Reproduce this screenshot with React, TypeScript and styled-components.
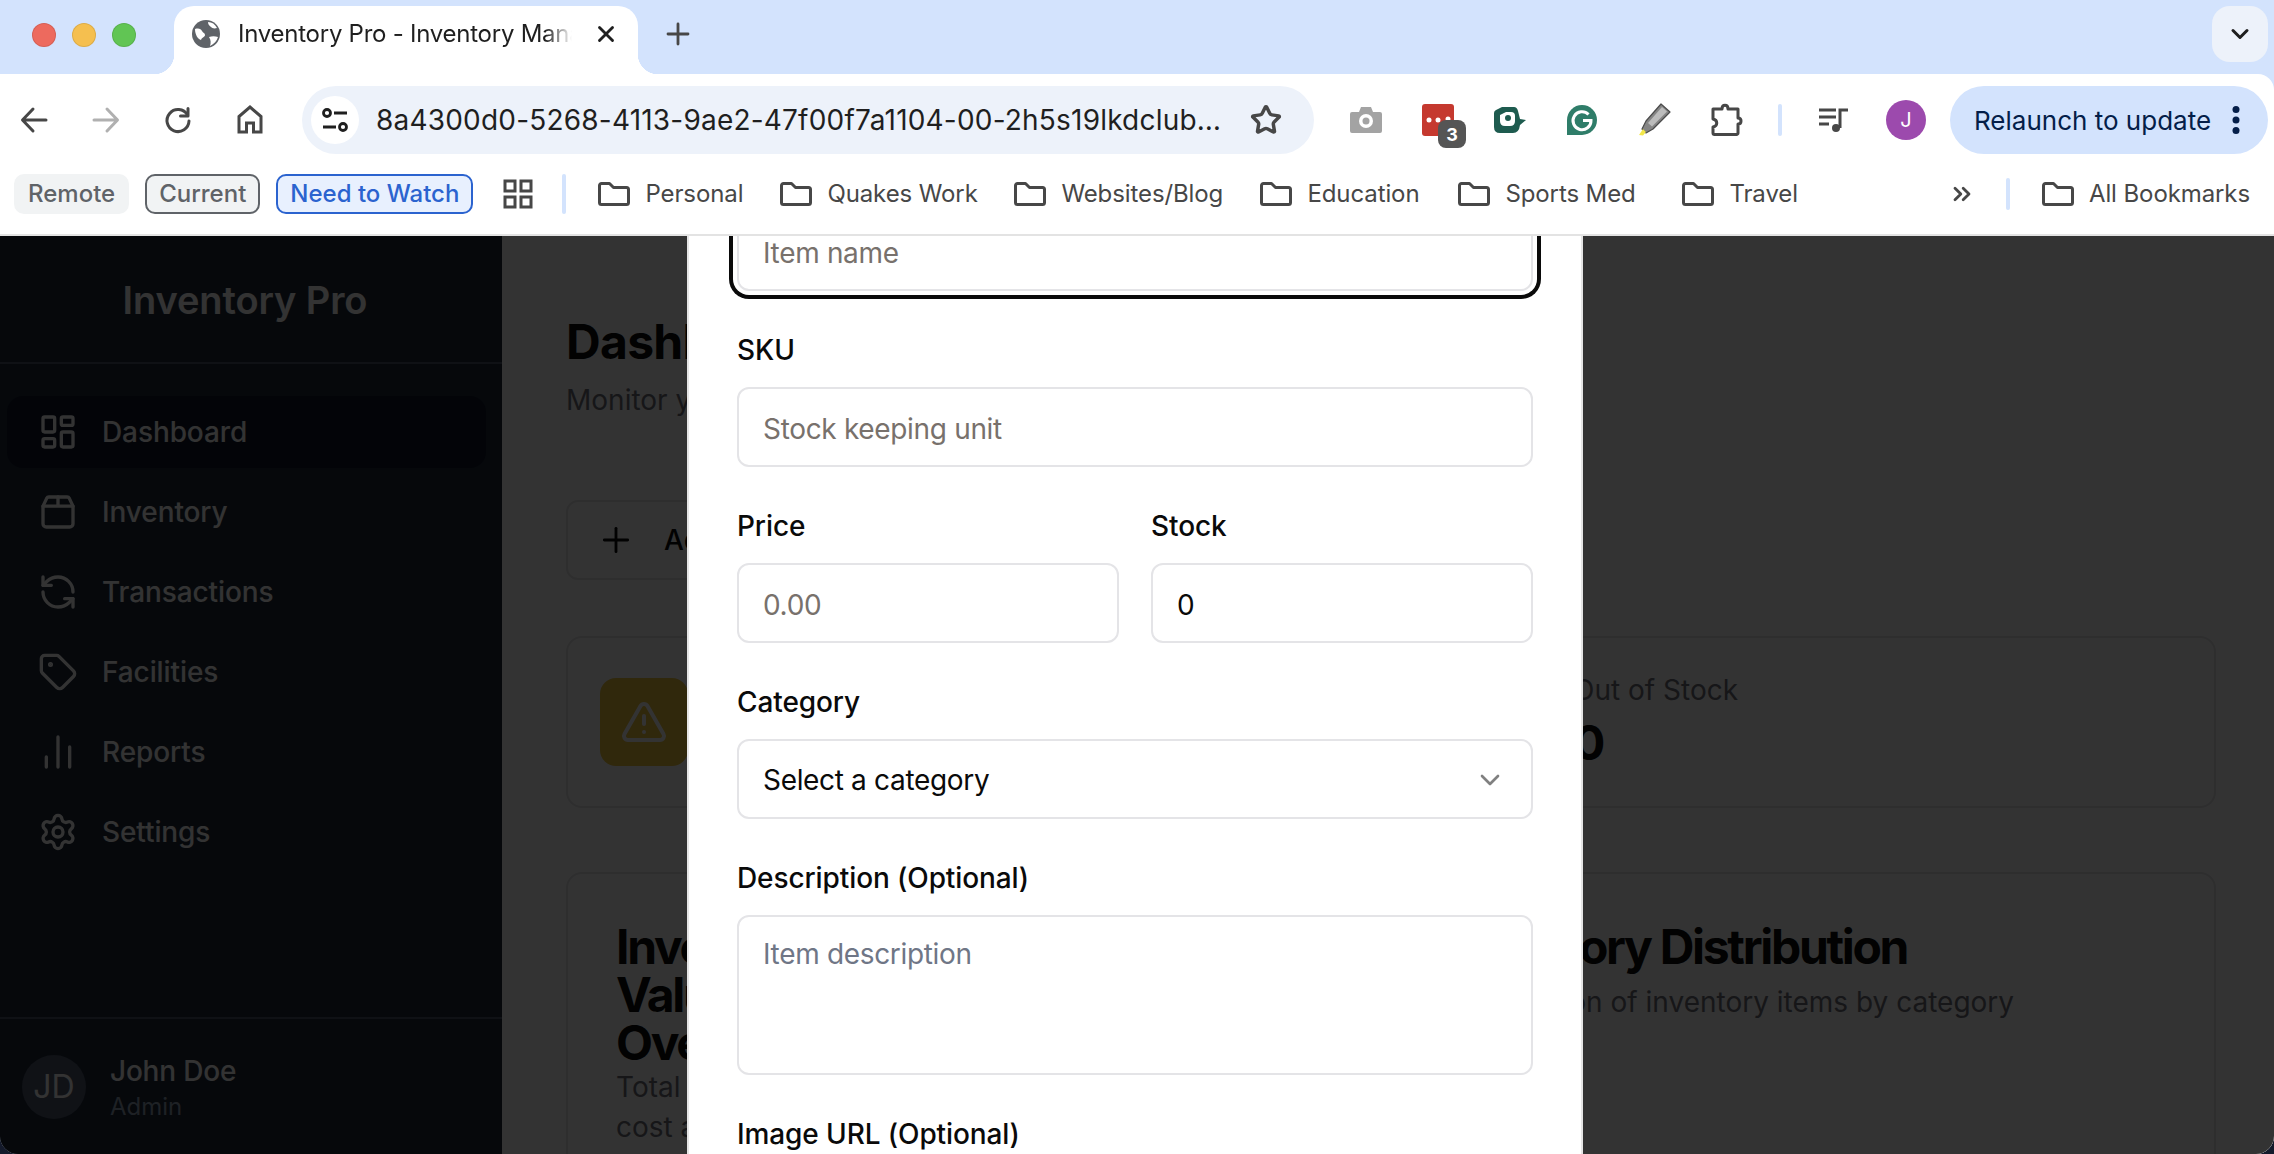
import React from "react";
import styled, { createGlobalStyle } from "styled-components";
import { LayoutDashboard, RefreshCcw, Tag, ChartNoAxesColumn, Settings, Plus, TriangleAlert, ChevronDown, Star, X, ChevronsRight } from "lucide-react";

const Global = createGlobalStyle`
  html, body { margin: 0; padding: 0; background: #141a2b; }
  * { box-sizing: border-box; }
  body { font-family: Inter, "Liberation Sans", sans-serif; }
`;

const Shell = styled.div`
  position: relative; width: 2274px; height: 1154px; overflow: hidden;
  display: flex; flex-direction: column;
  border-radius: 0 0 18px 18px; background: #fff;
`;
const Chrome = styled.header` background: #d3e3fd; flex: none; `;
const TabStrip = styled.div` height: 74px; display: flex; align-items: flex-start; padding-top: 6px; `;
const Lights = styled.div` display: flex; gap: 16px; margin: 17px 38px 0 32px; `;
const Light = styled.span<{ $c: string }>`
  width: 24px; height: 24px; border-radius: 50%; background: ${p => p.$c}; box-shadow: inset 0 0 0 1px rgba(0,0,0,.1);
`;
const Tab = styled.div`
  position: relative; width: 464px; height: 68px; background: #fff; border-radius: 20px 20px 0 0;
  display: flex; align-items: center; padding: 0 18px 12px; gap: 18px;
  &::before, &::after { content: ""; position: absolute; bottom: 0; width: 20px; height: 20px; }
  &::before { left: -20px; background: radial-gradient(circle at 0 0, transparent 20px, #fff 20.5px); }
  &::after { right: -20px; background: radial-gradient(circle at 100% 0, transparent 20px, #fff 20.5px); }
`;
const TabTitle = styled.span`
  width: 334px; flex: none; overflow: hidden; white-space: nowrap; font-size: 24px; line-height: 32px; color: #1f1f1f; letter-spacing: -.25px;
  -webkit-mask-image: linear-gradient(90deg, #000 92%, transparent 100%);
  mask-image: linear-gradient(90deg, #000 92%, transparent 100%);
`;
const TabClose = styled.span` display: flex; margin-left: 3px; color: #1f1f1f; `;
const NewTab = styled.span` display: flex; margin: 16px 0 0 28px; color: #474747; `;
const TabMenu = styled.span`
  margin-left: auto; margin-right: 6px; width: 56px; height: 56px; border-radius: 18px; background: #edf2fa;
  display: flex; align-items: center; justify-content: center; color: #1f1f1f;
`;
const Toolbar = styled.div`
  height: 90px; background: #fff; border-radius: 0 16px 0 0; display: flex; align-items: center;
  padding: 2px 6px 0; gap: 16px;
`;
const ToolButton = styled.span<{ $faded?: boolean }>`
  width: 56px; height: 56px; flex: none; display: flex; align-items: center; justify-content: center;
  position: relative; color: ${p => (p.$faded ? "#b0b0b0" : "#474747")};
`;
const Address = styled.div`
  width: 1012px; height: 68px; flex: none; margin: 0 8px; border-radius: 34px; background: #edf2fa;
  display: flex; align-items: center; padding: 0 32px 0 9px; color: #1f1f1f;
`;
const SiteChip = styled.span`
  width: 48px; height: 48px; border-radius: 50%; background: #fff; flex: none;
  display: flex; align-items: center; justify-content: center; margin-right: 17px;
`;
const Url = styled.span` font-size: 28px; line-height: 36px; white-space: nowrap; flex: 1; letter-spacing: .2px; `;
const Badge = styled.span`
  position: absolute; left: 28px; top: 28px; width: 28px; height: 28px; border-radius: 8px; background: #555;
  color: #fff; font-size: 18px; font-weight: 700; display: flex; align-items: center; justify-content: center;
`;
const VSep = styled.span<{ $h: number }>` width: 4px; height: ${p => p.$h}px; border-radius: 2px; background: #d3e3fd; flex: none; `;
const ToolSep = styled(VSep)` margin: 0 8px 0 8px; `;
const Avatar = styled.span`
  width: 40px; height: 40px; border-radius: 50%; background: #9c4aad; color: #fff; flex: none;
  font-size: 20px; display: flex; align-items: center; justify-content: center; margin-left: 8px;
`;
const Relaunch = styled.div`
  margin-left: auto; width: 318px; height: 68px; border-radius: 34px; background: #d3e3fd; color: #041e49;
  display: flex; align-items: center; justify-content: space-between; padding: 0 27px 0 24px;
  font-size: 26px; white-space: nowrap;
`;
const Bookmarks = styled.nav`
  height: 70px; background: #fff; display: flex; align-items: center; padding: 0 24px 10px 14px;
`;
const Chip = styled.span<{ $tone: "plain" | "grey" | "blue" }>`
  height: 40px; padding: 0 12px; border-radius: 10px; font-size: 24px; font-weight: 500; line-height: 36px;
  margin-right: 16px; white-space: nowrap;
  border: 2px solid ${p => (p.$tone === "plain" ? "#f1f3f4" : p.$tone === "grey" ? "#5f6368" : "#2b63cf")};
  background: ${p => (p.$tone === "blue" ? "#e8f0fe" : "#f1f3f4")};
  color: ${p => (p.$tone === "blue" ? "#2b63cf" : "#5f6368")};
`;
const AppsIcon = styled.span` display: flex; margin: 0 29px 0 14px; color: #474747; `;
const FolderList = styled.div` display: flex; align-items: center; margin-left: 32px; `;
const Folder = styled.span<{ $w?: number }>`
  display: flex; align-items: center; gap: 15px; font-size: 24px; line-height: 32px; color: #474747; white-space: nowrap; letter-spacing: -.1px;
  flex: none; ${p => (p.$w ? `width: ${p.$w}px;` : "")}
`;
const BookmarkEnd = styled.div` margin-left: auto; display: flex; align-items: center; color: #474747; `;
const EndSep = styled(VSep)` margin: 0 32px 0 30px; `;
const Rule = styled.div` height: 2px; background: #e3e3e3; flex: none; `;

const AppArea = styled.div` position: relative; flex: 1; display: flex; min-height: 0; overflow: hidden; `;
const Sidebar = styled.aside` width: 502px; flex: none; background: #1e293b; color: #fff; display: flex; flex-direction: column; `;
const Brand = styled.div`
  height: 128px; flex: none; border-bottom: 2px solid #4a5568; display: flex; align-items: center; justify-content: center;
  font-size: 38px; font-weight: 600; padding: 2px 12px 0 0; letter-spacing: -.1px;
`;
const Nav = styled.div` flex: 1; padding: 32px 16px 0 7px; display: flex; flex-direction: column; gap: 8px; `;
const NavRow = styled.div<{ $active?: boolean }>`
  height: 72px; border-radius: 16px; display: flex; align-items: center; gap: 24px; padding-left: 31px;
  font-size: 28px; font-weight: 500; letter-spacing: -.1px; background: ${p => (p.$active ? "#0f172a" : "transparent")};
`;
const UserBar = styled.div`
  height: 137px; flex: none; border-top: 2px solid #4a5568; display: flex; align-items: center; gap: 24px; padding: 0 0 0 22px;
`;
const UserAvatar = styled.div`
  width: 64px; height: 64px; border-radius: 50%; background: #505a6e; font-size: 32px;
  display: flex; align-items: center; justify-content: center;
`;
const UserText = styled.div` padding-top: 2px; `;
const UserName = styled.div` font-size: 28px; font-weight: 500; line-height: 36px; letter-spacing: -.2px; `;
const UserRole = styled.div` font-size: 24px; line-height: 32px; color: #94a3b8; margin-top: 2px; `;

const Main = styled.main` flex: 1; min-width: 0; background: #fff; padding: 76px 58px 0 64px; color: #0a0a0a; `;
const Heading = styled.h1` margin: 0; font-size: 48px; font-weight: 700; line-height: 60px; letter-spacing: -.7px; `;
const Lead = styled.p` margin: 8px 0 0; font-size: 28px; line-height: 40px; color: #71717a; `;
const AddButton = styled.div`
  margin-top: 80px; height: 80px; width: 300px; border: 2px solid #e4e4e7; border-radius: 12px;
  display: flex; align-items: center; gap: 28px; padding-left: 28px; font-size: 28px; font-weight: 500;
`;
const Stats = styled.div` margin-top: 56px; display: grid; grid-template-columns: 1fr 1fr; gap: 48px; `;
const StatCard = styled.div`
  height: 172px; border: 2px solid #e4e4e7; border-radius: 16px; display: flex; align-items: center; gap: 36px; padding: 0 32px;
`;
const StatIcon = styled.div`
  width: 88px; height: 88px; border-radius: 16px; background: #eec53f; color: #fff;
  display: flex; align-items: center; justify-content: center;
`;
const StatText = styled.div` margin-bottom: 3px; `;
const StatLabel = styled.div` font-size: 28px; line-height: 40px; color: #71717a; `;
const StatValue = styled.div` margin-top: 5px; font-size: 48px; font-weight: 700; line-height: 56px; `;
const Charts = styled.div` margin-top: 64px; display: grid; grid-template-columns: 787px 1fr; gap: 48px; `;
const ChartCard = styled.section` height: 420px; border: 2px solid #e4e4e7; border-radius: 16px; padding: 49px 48px; `;
const ChartTitle = styled.h2<{ $narrow?: boolean }>`
  margin: 0; font-size: 48px; font-weight: 700; line-height: 48px; letter-spacing: -2.3px;
  max-width: ${p => (p.$narrow ? "225px" : "none")};
`;
const ChartSub = styled.p<{ $narrow?: boolean; $gap: number }>`
  margin: ${p => p.$gap}px 0 0; font-size: 28px; line-height: 40px; color: #71717a;
  max-width: ${p => (p.$narrow ? "360px" : "none")};
`;

const Scrim = styled.div` position: absolute; inset: 0; background: rgba(0,0,0,.8); `;
const Modal = styled.div`
  position: absolute; top: 0; bottom: 0; left: 687px; width: 896px; background: #fff; overflow: hidden;
  border: solid #e5e5e5; border-width: 0 2px; padding: 0 48px; color: #0a0a0a;
`;
const Form = styled.form` margin-top: -25px; display: flex; flex-direction: column; gap: 39px; `;
const Field = styled.div` display: flex; flex-direction: column; gap: 17px; min-width: 0; `;
const Label = styled.label` font-size: 28px; font-weight: 500; line-height: 40px; letter-spacing: -.1px; `;
const inputBase = `
  width: 100%; border: 2px solid #e4e4e7; border-radius: 12px; background: #fff; font: 400 28px/40px Inter, sans-serif;
  letter-spacing: -.33px; color: #0a0a0a; padding: 3px 24px 0; outline: none;
`;
const Input = styled.input<{ $focused?: boolean }>`
  ${inputBase} height: 80px;
  &::placeholder { color: #78716c; opacity: 1; }
  ${p => (p.$focused ? "box-shadow: 0 0 0 4px #fff, 0 0 0 8px #0a0a0a;" : "")}
`;
const TextArea = styled.textarea`
  ${inputBase} height: 160px; padding: 17px 24px; resize: none; display: block;
  &::placeholder { color: #6f7686; opacity: 1; }
`;
const SelectBox = styled.div`
  ${inputBase} height: 80px; display: flex; align-items: center; justify-content: space-between; padding: 1px 25px 0 24px;
`;
const Chevron = styled.span` display: flex; color: #808080; `;
const TwoCols = styled.div` display: grid; grid-template-columns: 1fr 1fr; gap: 32px; `;

const Svg = ({ w = 32, h = 32, children, sw = 3 }: { w?: number; h?: number; sw?: number; children: React.ReactNode }) => (
  <svg width={w} height={h} viewBox={`0 0 ${w} ${h}`} fill="none" stroke="currentColor" strokeWidth={sw} strokeLinecap="round" strokeLinejoin="round">{children}</svg>
);
const FolderIcon = () => (
  <svg width="32" height="24" viewBox="0 0 32 24" fill="none" stroke="currentColor" strokeWidth="3" strokeLinejoin="round">
    <path d="M1.5 3.5a2 2 0 0 1 2-2h8l4 4h13a2 2 0 0 1 2 2v13a2 2 0 0 1-2 2h-25a2 2 0 0 1-2-2z" />
  </svg>
);
const InventoryIcon = () => (
  <svg width="40" height="40" viewBox="0 0 24 24" fill="none" stroke="currentColor" strokeWidth="2" strokeLinecap="round" strokeLinejoin="round">
    <path d="M3 8.5 5.2 3.8A1.5 1.5 0 0 1 6.6 3h10.8a1.5 1.5 0 0 1 1.4.8L21 8.5V19a2 2 0 0 1-2 2H5a2 2 0 0 1-2-2z" />
    <path d="M3 8.5h18M12 3v5.5" />
  </svg>
);

const folders: [string, number][] = [["Personal", 182], ["Quakes Work", 234], ["Websites/Blog", 246], ["Education", 198], ["Sports Med", 224], ["Travel", 116]];

export default function App() {
  return (
    <>
      <Global />
      <Shell>
        <Chrome>
          <TabStrip>
            <Lights>
              <Light $c="#ed6a5e" /><Light $c="#f5bf4f" /><Light $c="#61c554" />
            </Lights>
            <Tab>
              <svg width="28" height="28" viewBox="0 0 28 28">
                <circle cx="14" cy="14" r="14" fill="#5f6368" />
                <path d="M3 9c4-1 6 0 7 2s3 2 3 4-3 2-4 5c-3-1-6-5-6-11zM16 2c4 0 7 2 9 6-3 1-5 0-6-1s-3-2-3-5zM17 17c3-1 6-1 9 0-1 4-4 7-8 9 1-3 1-6-1-9z" fill="#fff" />
              </svg>
              <TabTitle>Inventory Pro - Inventory Management</TabTitle>
              <TabClose><X size={26} strokeWidth={2.6} /></TabClose>
            </Tab>
            <NewTab>
              <Svg w={24} h={24} sw={2.8}><path d="M12 2v20M2 12h20" /></Svg>
            </NewTab>
            <TabMenu><ChevronDown size={28} strokeWidth={2.6} /></TabMenu>
          </TabStrip>
          <Toolbar>
            <ToolButton><Svg><path d="M28 16H5M15 5 4.500 16 15 27" /></Svg></ToolButton>
            <ToolButton $faded><Svg><path d="M4 16h23M17 5l10.500 11L17 27" /></Svg></ToolButton>
            <ToolButton><Svg><path d="M25.500 11A11 11 0 1 0 27 17" /><path d="M26 4.500V12h-7.500" /></Svg></ToolButton>
            <ToolButton><svg width="32" height="32" viewBox="0 0 32 32" fill="none" stroke="currentColor" strokeWidth="3" strokeLinejoin="miter"><path d="M5 28V12.500L16 3l11 9.500V28h-7.500v-9h-7v9z" /></svg></ToolButton>
            <Address>
              <SiteChip>
                <svg width="30" height="30" viewBox="0 0 30 30" fill="none" stroke="#1f1f1f" strokeWidth="2.800">
                  <circle cx="7" cy="8" r="3.500" /><path d="M14 8h13M3 22h13" /><circle cx="23" cy="22" r="3.500" />
                </svg>
              </SiteChip>
              <Url>8a4300d0-5268-4113-9ae2-47f00f7a1104-00-2h5s19lkdclub…</Url>
              <Star size={32} strokeWidth={2.6} color="#474747" />
            </Address>
            <ToolButton>
              <svg width="32" height="28" viewBox="0 0 32 28">
                <path d="M2 6h7l2-5h10l2 5h7a2 2 0 0 1 2 2v17a2 2 0 0 1-2 2H2a2 2 0 0 1-2-2V8a2 2 0 0 1 2-2z" fill="#a3a3a3" />
                <circle cx="16" cy="15" r="7" fill="#fff" /><circle cx="16" cy="15" r="3.500" fill="#a3a3a3" />
              </svg>
            </ToolButton>
            <ToolButton>
              <svg width="32" height="32" viewBox="0 0 32 32">
                <rect width="32" height="32" rx="3" fill="#c5392f" />
                <circle cx="7" cy="16" r="2.500" fill="#fff" /><circle cx="16" cy="16" r="2.500" fill="#fff" /><circle cx="26" cy="15" r="2.500" fill="#fff" />
              </svg>
              <Badge>3</Badge>
            </ToolButton>
            <ToolButton>
              <svg width="34" height="28" viewBox="0 0 34 28">
                <path d="M1 7q0-2 2-3l6-3h12q3 0 4 4l2 8 6 1-6 5q-1 8-7 8H7q-6 0-6-6z" fill="#1e5b4f" />
                <path d="M7 9l6-3h5q4 0 4 4v5q0 5-5 5h-5q-5 0-5-5z" fill="#fff" />
                <circle cx="15" cy="12" r="3" fill="#1e5b4f" />
              </svg>
            </ToolButton>
            <ToolButton>
              <svg width="30" height="30" viewBox="0 0 30 30">
                <path d="M15 0a15 15 0 0 1 0 30H0V15A15 15 0 0 1 15 0z" fill="#2f7d69" />
                <path d="M21.500 9.500A9 9 0 1 0 24 15.500h-8" fill="none" stroke="#fff" strokeWidth="3" />
              </svg>
            </ToolButton>
            <ToolButton>
              <svg width="34" height="34" viewBox="0 0 34 34">
                <path d="M24 1l9 8-17 17-7 4-4-4 4-8z" fill="#858585" stroke="#4a4a4a" strokeWidth="1.200" strokeLinejoin="round" />
                <path d="M25 4l5 4.500-15 15-4-3.500z" fill="#bcbcbc" />
                <path d="M6 26l3 3-3 3.500-4-.5z" fill="#f3e84a" />
              </svg>
            </ToolButton>
            <ToolButton>
              <svg width="36" height="36" viewBox="-2 0 36 36" fill="none" stroke="currentColor" strokeWidth="3" strokeLinejoin="round">
                <path d="M3 7h9c0-5 6-5 6 0h10v9c4 0 4 6 0 6v9a1.500 1.500 0 0 1-1.500 1.500h-22A1.500 1.500 0 0 1 3 31v-6c5-1 5-7 0-8z" />
              </svg>
            </ToolButton>
            <ToolSep $h={32} />
            <ToolButton>
              <svg width="32" height="32" viewBox="0 0 32 32" fill="none" stroke="currentColor" strokeWidth="3">
                <path d="M1 6h17M1 13h17M1 20h10M30 6H22v18" />
                <circle cx="18" cy="24" r="4" fill="currentColor" stroke="none" />
              </svg>
            </ToolButton>
            <Avatar>J</Avatar>
            <Relaunch>
              <span>Relaunch to update</span>
              <svg width="10" height="30" viewBox="0 0 10 30" fill="#041e49">
                <circle cx="5" cy="4.500" r="3.500" /><circle cx="5" cy="15" r="3.500" /><circle cx="5" cy="25.500" r="3.500" />
              </svg>
            </Relaunch>
          </Toolbar>
          <Bookmarks>
            <Chip $tone="plain">Remote</Chip>
            <Chip $tone="grey">Current</Chip>
            <Chip $tone="blue">Need to Watch</Chip>
            <AppsIcon>
              <svg width="30" height="30" viewBox="0 0 30 30" fill="none" stroke="currentColor" strokeWidth="3">
                <rect x="2" y="2" width="10" height="10" /><rect x="18" y="2" width="10" height="10" />
                <rect x="2" y="18" width="10" height="10" /><rect x="18" y="18" width="10" height="10" />
              </svg>
            </AppsIcon>
            <VSep $h={40} />
            <FolderList>
              {folders.map(([name, width]) => (
                <Folder key={name} $w={width}><FolderIcon />{name}</Folder>
              ))}
            </FolderList>
            <BookmarkEnd>
              <ChevronsRight size={28} strokeWidth={2.4} />
              <EndSep $h={32} />
              <Folder><FolderIcon />All Bookmarks</Folder>
            </BookmarkEnd>
          </Bookmarks>
          <Rule />
        </Chrome>
        <AppArea>
          <Sidebar>
            <Brand>Inventory Pro</Brand>
            <Nav>
              <NavRow $active><LayoutDashboard size={40} />Dashboard</NavRow>
              <NavRow><InventoryIcon />Inventory</NavRow>
              <NavRow><RefreshCcw size={40} />Transactions</NavRow>
              <NavRow><Tag size={40} />Facilities</NavRow>
              <NavRow><ChartNoAxesColumn size={40} />Reports</NavRow>
              <NavRow><Settings size={40} />Settings</NavRow>
            </Nav>
            <UserBar>
              <UserAvatar>JD</UserAvatar>
              <UserText>
                <UserName>John Doe</UserName>
                <UserRole>Admin</UserRole>
              </UserText>
            </UserBar>
          </Sidebar>
          <Main>
            <Heading>Dashboard</Heading>
            <Lead>Monitor your inventory</Lead>
            <AddButton><Plus size={40} strokeWidth={1.7} />Add Item</AddButton>
            <Stats>
              <StatCard>
                <StatIcon><TriangleAlert size={48} strokeWidth={2} /></StatIcon>
              </StatCard>
              <StatCard>
                <StatIcon />
                <StatText><StatLabel>Out of Stock</StatLabel><StatValue>0</StatValue></StatText>
              </StatCard>
            </Stats>
            <Charts>
              <ChartCard>
                <ChartTitle $narrow>Inventory Value Over Time</ChartTitle>
                <ChartSub $narrow $gap={0}>Total inventory value and cost analysis</ChartSub>
              </ChartCard>
              <ChartCard>
                <ChartTitle>Category Distribution</ChartTitle>
                <ChartSub $gap={11}>Distribution of inventory items by category</ChartSub>
              </ChartCard>
            </Charts>
          </Main>
          <Scrim />
          <Modal>
            <Form>
              <Field>
                <Input $focused placeholder="Item name" readOnly />
              </Field>
              <Field>
                <Label>SKU</Label>
                <Input placeholder="Stock keeping unit" readOnly />
              </Field>
              <TwoCols>
                <Field>
                  <Label>Price</Label>
                  <Input placeholder="0.00" readOnly />
                </Field>
                <Field>
                  <Label>Stock</Label>
                  <Input defaultValue="0" readOnly />
                </Field>
              </TwoCols>
              <Field>
                <Label>Category</Label>
                <SelectBox>
                  Select a category
                  <Chevron><ChevronDown size={32} strokeWidth={2} /></Chevron>
                </SelectBox>
              </Field>
              <Field>
                <Label>Description (Optional)</Label>
                <TextArea placeholder="Item description" readOnly />
              </Field>
              <Field>
                <Label>Image URL (Optional)</Label>
              </Field>
            </Form>
          </Modal>
        </AppArea>
      </Shell>
    </>
  );
}
